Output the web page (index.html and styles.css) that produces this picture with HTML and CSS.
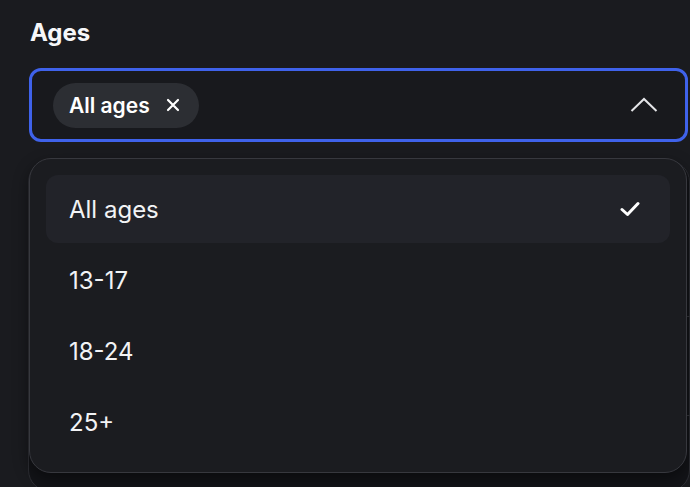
FILE: index.html
```html
<!DOCTYPE html>
<html lang="en">
<head>
<meta charset="utf-8">
<title>Ages</title>
<link rel="stylesheet" href="styles.css">
</head>
<body>
<main class="page">
  <h2 class="label">Ages</h2>
  <div class="field">
    <div class="select">
      <span class="chip">All ages
        <svg class="chip-x" width="14" height="14" viewBox="0 0 14 14"><path d="M2 2 L12 12 M12 2 L2 12" stroke="#fff" stroke-width="2.2" stroke-linecap="round"/></svg>
      </span>
      <svg class="chevron" width="28" height="16" viewBox="0 0 28 16"><path d="M1.5 14 L14 2 L26.5 14" fill="none" stroke="#e4e5e8" stroke-width="2"/></svg>
    </div>
    <div class="behind">
      <div class="behind-row r1"></div>
      <div class="behind-row r2"></div>
      <div class="behind-row r3"></div>
    </div>
    <ul class="menu">
      <li class="item active">All ages
        <svg class="check" width="20" height="16" viewBox="0 0 20 16"><path d="M2 8.5 L7.5 13.5 L18 2.5" fill="none" stroke="#fff" stroke-width="3" stroke-linecap="round" stroke-linejoin="round"/></svg>
      </li>
      <li class="item">13-17</li>
      <li class="item">18-24</li>
      <li class="item">25+</li>
    </ul>
  </div>
</main>
</body>
</html>
```

FILE: styles.css
```css
* { box-sizing: border-box; }
html, body {
  margin: 0;
  padding: 0;
  background: #1a1b1f;
  height: 100%;
  overflow: hidden;
}
body {
  font-family: Inter, "Noto Sans", "Liberation Sans", sans-serif;
  color: #f4f5f7;
}
.page {
  padding: 18px 2px 0 29px;
}
.label {
  margin: 0;
  font-size: 24px;
  line-height: 30px;
  font-weight: 700;
  color: #f6f7f9;
  padding-left: 1px;
}
.field {
  position: relative;
  margin-top: 20px;
  width: 659px;
}
.select {
  height: 74px;
  border: 3px solid #3f62ea;
  border-radius: 12px;
  background: #18191d;
  display: flex;
  align-items: center;
  justify-content: space-between;
  padding: 0 27px 0 21px;
}
.chip {
  display: inline-flex;
  align-items: center;
  gap: 16px;
  height: 45px;
  padding: 0 19px 0 16px;
  border-radius: 23px;
  background: #2c2e33;
  font-size: 21px;
  font-weight: 600;
  color: #ffffff;
}
.chevron { display: block; }
.behind {
  margin-top: 18px;
  height: 332px;
  width: 662px;
  margin-left: -1px;
  border: 1px solid #2e2f35;
  border-radius: 22px;
  background: #131418;
  display: flex;
  flex-direction: column;
  padding-top: 81px;
}
.behind-row {
  border-bottom: 1px solid #34353b;
  margin-right: -4px;
}
.r1 { height: 75px; }
.r2 { height: 99px; }
.r3 { height: 1px; border: none; }
.menu {
  position: absolute;
  top: 90px;
  left: 0;
  width: 658px;
  height: 315px;
  margin: 0;
  padding: 16px;
  list-style: none;
  background: #1b1c20;
  border: 1px solid #37383e;
  border-radius: 22px;
  box-shadow: 0 6px 16px rgba(0, 0, 0, 0.45);
  display: flex;
  flex-direction: column;
  gap: 3px;
}
.item {
  height: 68px;
  flex: none;
  display: flex;
  align-items: center;
  justify-content: space-between;
  padding: 0 30px 0 23px;
  border-radius: 12px;
  font-size: 24px;
  font-weight: 400;
  color: #f2f3f5;
}
.item.active {
  background: #222329;
}
.check { display: block; }
```
